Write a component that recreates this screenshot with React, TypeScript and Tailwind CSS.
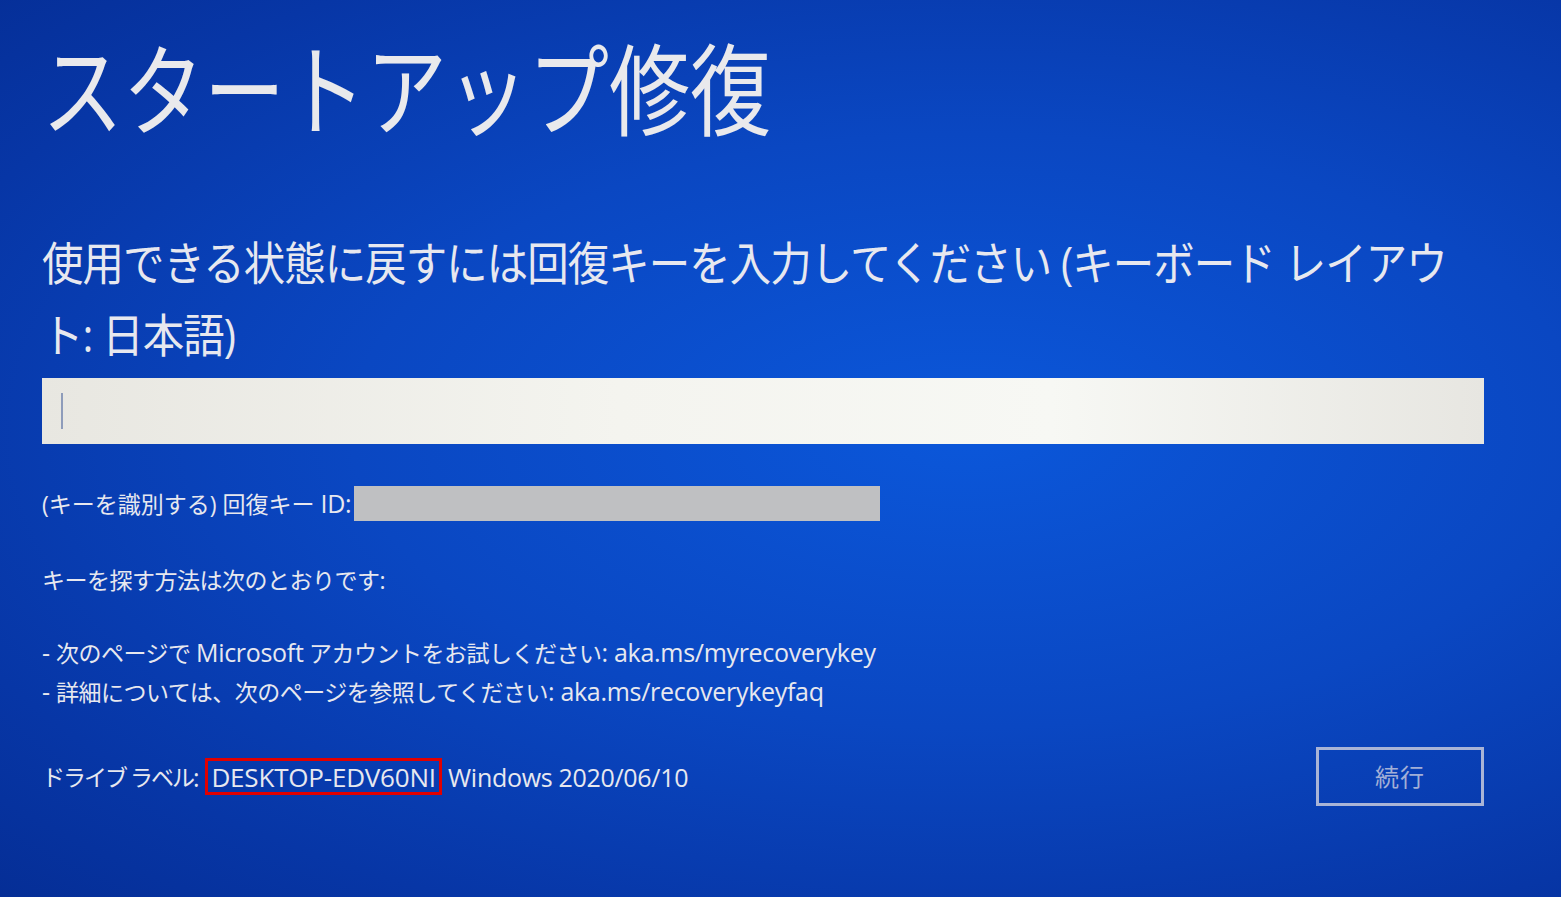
function L({ children }: { children: React.ReactNode }) {
  // latin runs on the recovery screen are set a touch larger than the kana
  return <span className="text-[25px] tracking-[-0.3px]">{children}</span>;
}

export default function App() {
  const font = "font-['Open_Sans','Noto_Sans_CJK_JP',sans-serif]";

  return (
    <div
      className={`w-[1561px] h-[897px] overflow-hidden bg-[radial-gradient(ellipse_at_62%_48%,#0b57da_0%,#0a47c2_45%,#0736a6_80%,#052e96_100%)] text-[#e7e8ef] ${font}`}
    >
      <div className="pl-[42px] pt-[39px] w-[1484px] flex flex-col">
        <h1 className="text-[100px] leading-[100px] font-normal whitespace-nowrap origin-left scale-x-[0.81] text-[#e9e9ec]">
          スタートアップ修復
        </h1>

        <p className="mt-[87px] text-[46px] leading-[72px] tracking-[-1px] whitespace-nowrap origin-left scale-x-[0.9]">
          使用できる状態に戻すには回復キーを入力してください (キーボード レイアウ
          <br />
          ト: 日本語)
        </p>

        <div className="mt-[8px] h-[66px] bg-[linear-gradient(90deg,#e8e7e1_0%,#f4f4ef_40%,#f7f8f4_70%,#e7e6e1_100%)] flex items-center pl-[19px]">
          <div className="w-[2px] h-[36px] bg-[#8e9cba]" />
        </div>

        <div className="mt-[42px] flex items-center h-[35px] text-[23px]">
          <span>
            (キーを識別する) 回復キー <L>ID:</L>
          </span>
          <div className="ml-[3px] w-[526px] h-[35px] bg-[#bfc0c2]" />
        </div>

        <p className="mt-[44px] text-[23px] leading-[30px] tracking-[-0.5px]">
          キーを探す方法は次のとおりです:
        </p>

        <div className="mt-[38px] text-[23px] leading-[38px] tracking-[-0.5px]">
          <p>
            <L>- </L>次のページで <L>Microsoft</L> アカウントをお試しください
            <L>: aka.ms/myrecoverykey</L>
          </p>
          <p>
            <L>- </L>詳細については、次のページを参照してください<L>: aka.ms/recoverykeyfaq</L>
          </p>
        </div>

        <div className="mt-[36px] flex items-center justify-between">
          <p className="text-[23px] leading-[30px] tracking-[-2px] flex items-center">
            <span>ドライブ ラベル</span>
            <L>:&nbsp;</L>
            <span className="border-[3px] border-[#e10000] h-[37px] px-[3px] flex items-center">
              <span className="text-[26px] tracking-[-0.2px]">DESKTOP-EDV60NI</span>
            </span>
            <L>&nbsp;Windows 2020/06/10</L>
          </p>
          <button className="w-[168px] h-[59px] border-[3px] border-[#a9b4d6] text-[24px] text-[#a2afd7] tracking-[1px]">
            続行
          </button>
        </div>
      </div>
    </div>
  );
}
